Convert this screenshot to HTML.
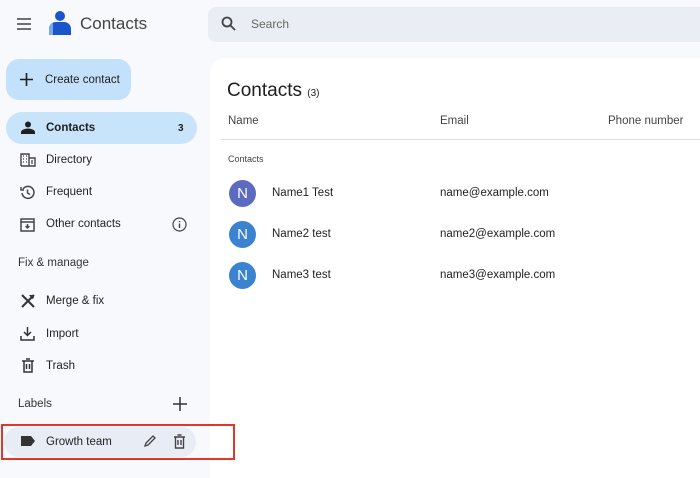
<!DOCTYPE html>
<html><head><style>
*{box-sizing:border-box;margin:0;padding:0}
body{width:700px;height:474px;overflow:hidden;background:#f7f9fc;font-family:"Liberation Sans",sans-serif;color:#1f1f1f;position:relative}
.a{position:absolute}
.t{font-size:11.5px;color:#1f1f1f}
svg{display:block}
</style></head><body>
<svg class="a" style="left:16px;top:17px" width="16" height="14"><path d="M1 2h14M1 7h14M1 12h14" stroke="#444" stroke-width="1.6"/></svg>
<svg class="a" style="left:48px;top:10px" width="24" height="26"><circle cx="12" cy="6" r="5" fill="#1a56c9"/><path d="M1 25v-6a7 7 0 0 1 7-7h8a7 7 0 0 1 7 7v6z" fill="#1a56c9"/><path d="M1 25v-6a7 7 0 0 1 4-6v12z" fill="#7ba6f0"/></svg>
<div class="a" style="left:80px;top:14px;font-size:17px;color:#444">Contacts</div>
<div class="a" style="left:208px;top:7px;width:492px;height:35px;background:#eaeef4;border-radius:8px 0 0 8px"></div>
<svg class="a" style="left:221px;top:16px" width="15" height="15"><circle cx="6" cy="6" r="4.5" stroke="#444" stroke-width="1.8" fill="none"/><path d="M9.5 9.5l4.5 4.5" stroke="#444" stroke-width="1.8"/></svg>
<div class="a" style="left:251px;top:17px;font-size:12px;color:#666">Search</div>
<div class="a" style="left:6px;top:59px;width:125px;height:41px;background:#c3e1fb;border-radius:13px"></div>
<svg class="a" style="left:20px;top:73px" width="13" height="13"><path d="M6.5 0v13M0 6.5h13" stroke="#1f1f1f" stroke-width="1.6"/></svg>
<div class="a t" style="left:45px;top:74px;font-weight:500">Create contact</div>
<div class="a" style="left:6px;top:112px;width:191px;height:32px;background:#c8e4fb;border-radius:16px"></div>
<svg class="a" style="left:21px;top:121px" width="14" height="13"><circle cx="7" cy="3.5" r="3" fill="#1f1f1f"/><path d="M0 13v-2c0-2 4-3.5 7-3.5s7 1.5 7 3.5v2z" fill="#1f1f1f"/></svg>
<div class="a t" style="left:46px;top:122px;font-weight:bold">Contacts</div>
<div class="a" style="left:178px;top:123px;font-size:10px;font-weight:bold">3</div>
<svg class="a" style="left:20px;top:153px" width="16" height="14"><path d="M1 13V1h8v12M9 5h6v8H1" stroke="#444" stroke-width="1.4" fill="none"/><path d="M3 3h1M6 3h1M3 6h1M6 6h1M3 9h1M6 9h1M11 8h2M11 10h2" stroke="#444" stroke-width="1.3"/></svg>
<div class="a t" style="left:46px;top:154px">Directory</div>
<svg class="a" style="left:20px;top:185px" width="15" height="15"><path d="M3 4a6 6 0 1 1-1 4" stroke="#444" stroke-width="1.5" fill="none"/><path d="M1 2v3h3" stroke="#444" stroke-width="1.4" fill="none"/><path d="M7.5 4.5v3.5l2.5 1.5" stroke="#444" stroke-width="1.4" fill="none"/></svg>
<div class="a t" style="left:46px;top:186px">Frequent</div>
<svg class="a" style="left:20px;top:217px" width="15" height="15"><rect x="1" y="2" width="13" height="12" stroke="#444" stroke-width="1.5" fill="none"/><path d="M1 5h13M7.5 7v4M5.5 9l2 2 2-2" stroke="#444" stroke-width="1.4" fill="none"/></svg>
<div class="a t" style="left:46px;top:218px">Other contacts</div>
<svg class="a" style="left:172px;top:217px" width="15" height="15"><circle cx="7.5" cy="7.5" r="6.5" stroke="#444" stroke-width="1.2" fill="none"/><path d="M7.5 6.5v4.5M7.5 4v1.2" stroke="#444" stroke-width="1.4"/></svg>
<div class="a" style="left:18px;top:257px;font-size:11.5px;font-weight:500;color:#333">Fix &amp; manage</div>
<svg class="a" style="left:20px;top:293px" width="16" height="16"><path d="M2 2l12 12M14 2L2 14" stroke="#333" stroke-width="2"/><path d="M9 2l4 0 1 3-2 1z" fill="#333"/></svg>
<div class="a t" style="left:46px;top:295px">Merge &amp; fix</div>
<svg class="a" style="left:20px;top:326px" width="15" height="15"><path d="M7.5 1v8M4 6l3.5 3.5L11 6M1 10v4h13v-4" stroke="#333" stroke-width="1.5" fill="none"/></svg>
<div class="a t" style="left:46px;top:328px">Import</div>
<svg class="a" style="left:21px;top:358px" width="14" height="15"><path d="M1 3h12M5 1h4M3 3v11h8V3M5.5 6v5M8.5 6v5" stroke="#333" stroke-width="1.5" fill="none"/></svg>
<div class="a t" style="left:46px;top:360px">Trash</div>
<div class="a" style="left:18px;top:398px;font-size:11.5px;font-weight:500;color:#333">Labels</div>
<svg class="a" style="left:173px;top:397px" width="14" height="14"><path d="M7 0v14M0 7h14" stroke="#333" stroke-width="1.5"/></svg>
<div class="a" style="left:210px;top:58px;width:500px;height:420px;background:#fff;border-radius:16px 0 0 0"></div>
<div class="a" style="left:4px;top:427px;width:192px;height:30px;background:#e8ecf5;border-radius:15px"></div>
<svg class="a" style="left:21px;top:436px" width="14" height="10"><path d="M0 0h10l4 5-4 5H0z" fill="#333"/></svg>
<div class="a t" style="left:46px;top:436px">Growth team</div>
<svg class="a" style="left:143px;top:434px" width="14" height="14"><path d="M2 12l1-3 7-7 2 2-7 7z" stroke="#444" stroke-width="1.3" fill="none"/></svg>
<svg class="a" style="left:173px;top:434px" width="13" height="15"><path d="M1 3h11M4.5 1h4M2.5 3v11h8V3M5 6v5M8 6v5" stroke="#444" stroke-width="1.4" fill="none"/></svg>
<div class="a" style="left:1px;top:424px;width:234px;height:36px;border:2.5px solid #e0372b"></div>
<div class="a" style="left:227px;top:80px;font-size:19px;color:#1f1f1f">Contacts <span style="font-size:10px">(3)</span></div>
<div class="a t" style="left:228px;top:115px;color:#444">Name</div>
<div class="a t" style="left:440px;top:115px;color:#444">Email</div>
<div class="a t" style="left:608px;top:115px;color:#444">Phone number</div>
<div class="a" style="left:221px;top:139px;width:479px;height:1px;background:#ddd"></div>
<div class="a" style="left:228px;top:154px;font-size:9px;color:#444">Contacts</div>
<div class="a" style="left:229px;top:180px;width:27px;height:27px;border-radius:50%;background:#5c6bc0;color:#fff;font-size:15px;text-align:center;line-height:27px">N</div>
<div class="a t" style="left:272px;top:187px">Name1 Test</div>
<div class="a t" style="left:440px;top:187px">name@example.com</div>
<div class="a" style="left:229px;top:221px;width:27px;height:27px;border-radius:50%;background:#3b82d0;color:#fff;font-size:15px;text-align:center;line-height:27px">N</div>
<div class="a t" style="left:272px;top:228px">Name2 test</div>
<div class="a t" style="left:440px;top:228px">name2@example.com</div>
<div class="a" style="left:229px;top:262px;width:27px;height:27px;border-radius:50%;background:#3b82d0;color:#fff;font-size:15px;text-align:center;line-height:27px">N</div>
<div class="a t" style="left:272px;top:269px">Name3 test</div>
<div class="a t" style="left:440px;top:269px">name3@example.com</div>
</body></html>
